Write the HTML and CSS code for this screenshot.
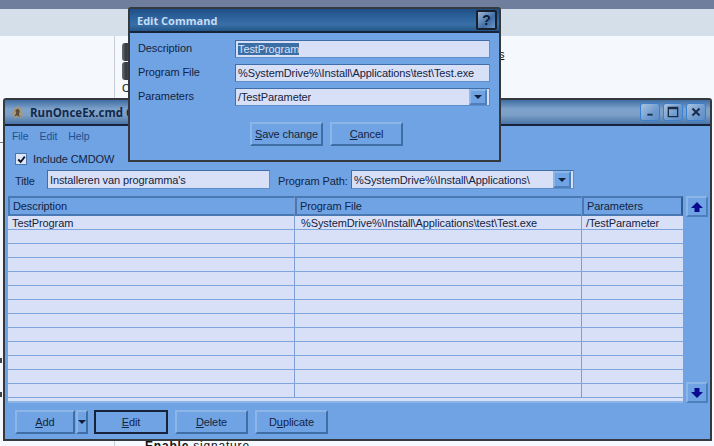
FILE: index.html
```html
<!DOCTYPE html>
<html>
<head>
<meta charset="utf-8">
<title>Edit Command</title>
<link rel="stylesheet" href="styles.css">
</head>
<body>
<div class="desktop">
  <div class="bg-top"></div>
  <div class="bg-nav"></div>
  <div class="bg-page">
    <div class="bg-rule"></div>
    <div class="bg-icon bg-icon-a"></div>
    <div class="bg-icon bg-icon-b"></div>
    <div class="bg-c">C</div>
    <div class="bg-link">s</div>
    <div class="bg-sig"><b>Enable</b> signature</div>
    <div class="bg-line"></div>
    <div class="bg-tick bg-tick-a"></div>
    <div class="bg-tick bg-tick-b"></div>
  </div>

  <section class="window main-window">
    <header class="titlebar titlebar-inactive">
      <svg class="app-icon" viewBox="0 0 18 18" width="16" height="16">
        <path d="M9 1l2 4 4 1-3 2 4 5-4-1 1 5-4-3-4 3 0-5-4 1 3-5-1-3 4 0z" fill="#a89878"/>
        <path d="M9 5l2 3-1 4 2 3-4-2-3 1 2-4-1-3z" fill="#5b4d3a"/>
      </svg>
      <span class="title-text">RunOnceEx.cmd Creator</span>
      <div class="win-buttons">
        <button class="win-btn"><svg viewBox="0 0 20 18" width="18" height="16"><rect x="7" y="11" width="6" height="2" fill="#1b2c48"/></svg></button>
        <button class="win-btn"><svg viewBox="0 0 20 18" width="18" height="16"><path d="M4 3h12v12H4zM5.500 6v7.500h9V6z" fill="#1b2c48" fill-rule="evenodd"/></svg></button>
        <button class="win-btn"><svg viewBox="0 0 20 18" width="18" height="16"><path d="M6 5l8 8M14 5l-8 8" stroke="#1b2c48" stroke-width="2.2"/></svg></button>
      </div>
    </header>
    <div class="main-body">
      <nav class="menu"><span>File</span><span>Edit</span><span>Help</span></nav>
      <label class="check-row">
        <span class="checkbox"><svg viewBox="0 0 11 11" width="9" height="9"><path d="M1.500 5.500l3 3 5-6.500" fill="none" stroke="#0a1020" stroke-width="2.2"/></svg></span>
        Include CMDOW
      </label>
      <div class="title-row">
        <span class="title-label">Title</span>
        <div class="field title-field">Installeren van programma's</div>
        <span class="path-label">Program Path:</span>
        <div class="field combo path-combo">
          <span class="combo-text">%SystemDrive%\Install\Applications\</span>
          <span class="combo-btn"><i class="caret"></i></span>
        </div>
      </div>
      <div class="table-row">
        <div class="grid">
          <div class="grid-head">
            <div class="col-a head-cell">Description</div>
            <div class="col-b head-cell">Program File</div>
            <div class="col-c head-cell">Parameters</div>
          </div>
          <div class="grid-rows">
            <div class="grid-row"><div class="col-a">TestProgram</div><div class="col-b">%SystemDrive%\Install\Applications\test\Test.exe</div><div class="col-c">/TestParameter</div></div>
            <div class="grid-row"><div class="col-a"></div><div class="col-b"></div><div class="col-c"></div></div>
            <div class="grid-row"><div class="col-a"></div><div class="col-b"></div><div class="col-c"></div></div>
            <div class="grid-row"><div class="col-a"></div><div class="col-b"></div><div class="col-c"></div></div>
            <div class="grid-row"><div class="col-a"></div><div class="col-b"></div><div class="col-c"></div></div>
            <div class="grid-row"><div class="col-a"></div><div class="col-b"></div><div class="col-c"></div></div>
            <div class="grid-row"><div class="col-a"></div><div class="col-b"></div><div class="col-c"></div></div>
            <div class="grid-row"><div class="col-a"></div><div class="col-b"></div><div class="col-c"></div></div>
            <div class="grid-row"><div class="col-a"></div><div class="col-b"></div><div class="col-c"></div></div>
            <div class="grid-row"><div class="col-a"></div><div class="col-b"></div><div class="col-c"></div></div>
            <div class="grid-row"><div class="col-a"></div><div class="col-b"></div><div class="col-c"></div></div>
            <div class="grid-row"><div class="col-a"></div><div class="col-b"></div><div class="col-c"></div></div>
            <div class="grid-row"><div class="col-a"></div><div class="col-b"></div><div class="col-c"></div></div>
          </div>
        </div>
        <div class="move-col">
          <button class="move-btn"><svg viewBox="0 0 14 14" width="14" height="14"><path d="M7 2l6 6H9.500v4h-5V8H1z" fill="#0a0a90"/></svg></button>
          <button class="move-btn"><svg viewBox="0 0 14 14" width="14" height="14"><path d="M7 12l6-6H9.500V2h-5v4H1z" fill="#0a0a90"/></svg></button>
        </div>
      </div>
      <div class="actions">
        <button class="btn btn-add"><u>A</u>dd</button>
        <button class="btn btn-drop"><i class="caret"></i></button>
        <button class="btn btn-action btn-default"><u>E</u>dit</button>
        <button class="btn btn-action"><u>D</u>elete</button>
        <button class="btn btn-action">D<u>u</u>plicate</button>
      </div>
    </div>
  </section>

  <section class="window dialog">
    <header class="titlebar titlebar-active">
      <span class="dialog-title">Edit Command</span>
      <button class="help-btn">?</button>
    </header>
    <div class="dialog-body">
      <div class="form-row">
        <span class="form-label">Description</span>
        <div class="field form-field"><span class="selected">TestProgram</span></div>
      </div>
      <div class="form-row">
        <span class="form-label">Program File</span>
        <div class="field form-field">%SystemDrive%\Install\Applications\test\Test.exe</div>
      </div>
      <div class="form-row">
        <span class="form-label">Parameters</span>
        <div class="field form-field combo">
          <span class="combo-text">/TestParameter</span>
          <span class="combo-btn"><i class="caret"></i></span>
        </div>
      </div>
      <div class="dialog-actions">
        <button class="btn btn-action"><u>S</u>ave change</button>
        <button class="btn btn-action"><u>C</u>ancel</button>
      </div>
    </div>
  </section>
</div>
</body>
</html>
```
FILE: styles.css
```css
* { box-sizing: border-box; }
html, body { margin: 0; padding: 0; }
body { width: 714px; height: 446px; overflow: hidden; font-family: "Liberation Sans", Arial, sans-serif; font-size: 11px; letter-spacing: -.1px; color: #14233f; }
button { font: inherit; letter-spacing: inherit; color: inherit; padding: 0; margin: 0; }

.desktop { position: relative; width: 714px; height: 446px; background: #f5f8fd; overflow: hidden; }
.bg-top { height: 9px; background: #6e7e9c; }
.bg-nav { height: 27px; background: #d5dfe9; }
.bg-page { position: relative; height: 410px; background: #f5f8fd; }
.bg-rule { position: absolute; left: 114px; top: 0; width: 1px; height: 410px; background: #c9ced6; }
.bg-icon { position: absolute; left: 122px; width: 8px; height: 18px; background: linear-gradient(90deg, #6a7078, #33383f 50%, #555b63); border-radius: 3px 0 0 3px; }
.bg-icon-a { top: 7px; }
.bg-icon-b { top: 26px; }
.bg-c { position: absolute; left: 122px; top: 46px; font-size: 11px; color: #111; }
.bg-link { position: absolute; left: 499px; top: 12px; font-size: 11px; color: #111; text-decoration: underline; }
.bg-sig { position: absolute; left: 145px; top: 403px; font-size: 12px; color: #111; letter-spacing: .8px; white-space: nowrap; }
.bg-line { position: absolute; left: 0; top: 106px; width: 4px; height: 1px; background: #777; }
.bg-tick { position: absolute; left: 0; width: 2px; height: 5px; background: #444; }
.bg-tick-a { top: 322px; }
.bg-tick-b { top: 356px; }

.window { position: absolute; display: flex; flex-direction: column; background: #6fa3e4; border: 2px solid #33393f; border-radius: 3px 3px 0 0; }
.main-window { left: 3px; top: 98px; width: 709px; height: 343px; }
.dialog { left: 128px; top: 7px; width: 373px; height: 155px; }

.titlebar { display: flex; align-items: center; flex: none; border-bottom: 2px solid #16233a; }
.titlebar-inactive { height: 26px; padding: 0 4px 0 5px; background: linear-gradient(#3f6da3, #7ea3cb 38%, #7c9fc6 62%, #4a75a8); }
.titlebar-active { height: 24px; padding: 0 2px 0 7px; background: linear-gradient(#1e4f86, #2f659f 45%, #3a70a8 70%, #235688); }
.app-icon { flex: none; margin-right: 4px; }
.title-text { font-family: "Open Sans", sans-serif; font-weight: 700; font-size: 11.500px; letter-spacing: 0; color: #12294e; white-space: nowrap; }
.win-buttons { display: flex; gap: 3px; margin-left: auto; }
.win-btn { width: 20px; height: 18px; border: 1px solid #3b7fd0; border-radius: 3px; background: linear-gradient(135deg, #a9c4e0, #6f9bd0 60%, #5d8cc6); display: flex; }
.help-btn { margin-left: auto; width: 21px; height: 20px; border: 2px solid #18202c; border-radius: 2px; background: linear-gradient(135deg, #9fb8d6, #3f6da6 60%, #6f97c4); color: #0c1a30; font-family: "Liberation Sans", sans-serif; font-weight: 700; font-size: 14px; line-height: 16px; }
.dialog-title { font-family: "Open Sans", sans-serif; font-weight: 700; font-size: 11px; letter-spacing: 0; color: #c8dcf5; white-space: nowrap; }

.main-body { flex: 1; display: flex; flex-direction: column; min-height: 0; padding: 1px 1px 0 3px; }
.menu { display: flex; gap: 11px; height: 17px; padding-left: 4px; align-items: center; color: #23508f; font-size: 10.500px; }
.check-row { display: flex; align-items: center; gap: 6px; height: 12px; margin-top: 9px; padding-left: 7px; white-space: nowrap; }
.checkbox { display: flex; align-items: center; justify-content: center; width: 12px; height: 12px; background: #dfe6f8; border: 1px solid #4a76ae; }
.title-row { display: flex; align-items: center; height: 19px; margin-top: 5px; padding-left: 7px; white-space: nowrap; }
.title-label { width: 32px; padding-top: 2px; flex: none; }
.title-field { width: 223px; height: 19px; margin-right: 8px; flex: none; }
.path-label { width: 73px; padding-top: 2px; flex: none; }

.field { display: flex; align-items: center; background: #d8e0f8; border: 1px solid #5d8ec9; border-left-color: #3f6ea8; border-top-color: #3f6ea8; padding: 0 2px; white-space: nowrap; }
.combo { position: relative; padding-right: 2px; }
.path-combo { width: 223px; height: 19px; flex: none; }
.combo-text { flex: 1; min-width: 0; }
.combo-btn { align-self: stretch; width: 18px; flex: none; display: flex; align-items: center; justify-content: center; background: #6fa3e4; border: 2px solid #8db6e8; border-right-color: #4f7fbb; border-bottom-color: #4f7fbb; }
.caret { display: block; width: 0; height: 0; border-style: solid; border-width: 4px 4px 0; border-color: #10203c transparent transparent; }

.table-row { display: flex; margin: 7px 0 0; height: 207px; }
.grid { width: 675px; height: 207px; background: #d8e0f8; border-bottom: 2px solid #8db6e8; overflow: hidden; flex: none; }
.grid-head { display: flex; height: 20px; background: #6fa3e4; }
.head-cell { height: 20px; line-height: 17px; border: 2px solid #4a78b2; border-right-color: #2f5b94; padding-left: 3px !important; }
.grid-rows { height: 185px; overflow: hidden; }
.grid-row { display: flex; height: 14px; line-height: 14px; border-bottom: 1px solid #7ea5dc; }
.col-a, .col-b, .col-c { flex: none; padding-left: 4px; white-space: nowrap; overflow: hidden; }
.col-a { width: 287px; border-right: 1px solid #7f9fd4; }
.col-b { width: 287px; border-right: 1px solid #7f9fd4; padding-left: 6px; }
.col-c { width: 101px; }
.move-col { display: flex; flex-direction: column; justify-content: space-between; width: 22px; margin-left: 3px; height: 207px; flex: none; }
.move-btn { width: 22px; height: 21px; display: flex; align-items: center; justify-content: center; background: #6fa3e4; border: 2px solid #8db6e8; border-right-color: #4f7fbb; border-bottom-color: #4f7fbb; }

.actions { display: flex; align-items: stretch; height: 24px; margin-top: 7px; padding-left: 7px; }
.btn { display: block; background: #6fa3e4; border: 2px solid #8db6e8; border-right-color: #3f6da6; border-bottom-color: #3f6da6; white-space: nowrap; }
.btn-add { width: 60px; }
.btn-drop { width: 12px; margin-left: 1px; margin-right: 6px; display: flex; align-items: center; justify-content: center; }
.btn-action { width: 73px; margin-right: 7px; }
.btn-default { width: 74px; border-color: #16233a; }

.dialog-body { flex: 1; padding: 7px 9px 0 8px; }
.form-row { display: flex; align-items: center; height: 18px; margin-bottom: 6px; }
.form-label { width: 97px; flex: none; padding-bottom: 2px; }
.form-field { width: 255px; height: 18px; }
.selected { background: #3a6ea5; color: #d8e0f8; }
.dialog-actions { display: flex; gap: 7px; padding-left: 112px; height: 24px; margin-top: 16px; }
.dialog-actions .btn-action { margin-right: 0; width: 73px; }
```
